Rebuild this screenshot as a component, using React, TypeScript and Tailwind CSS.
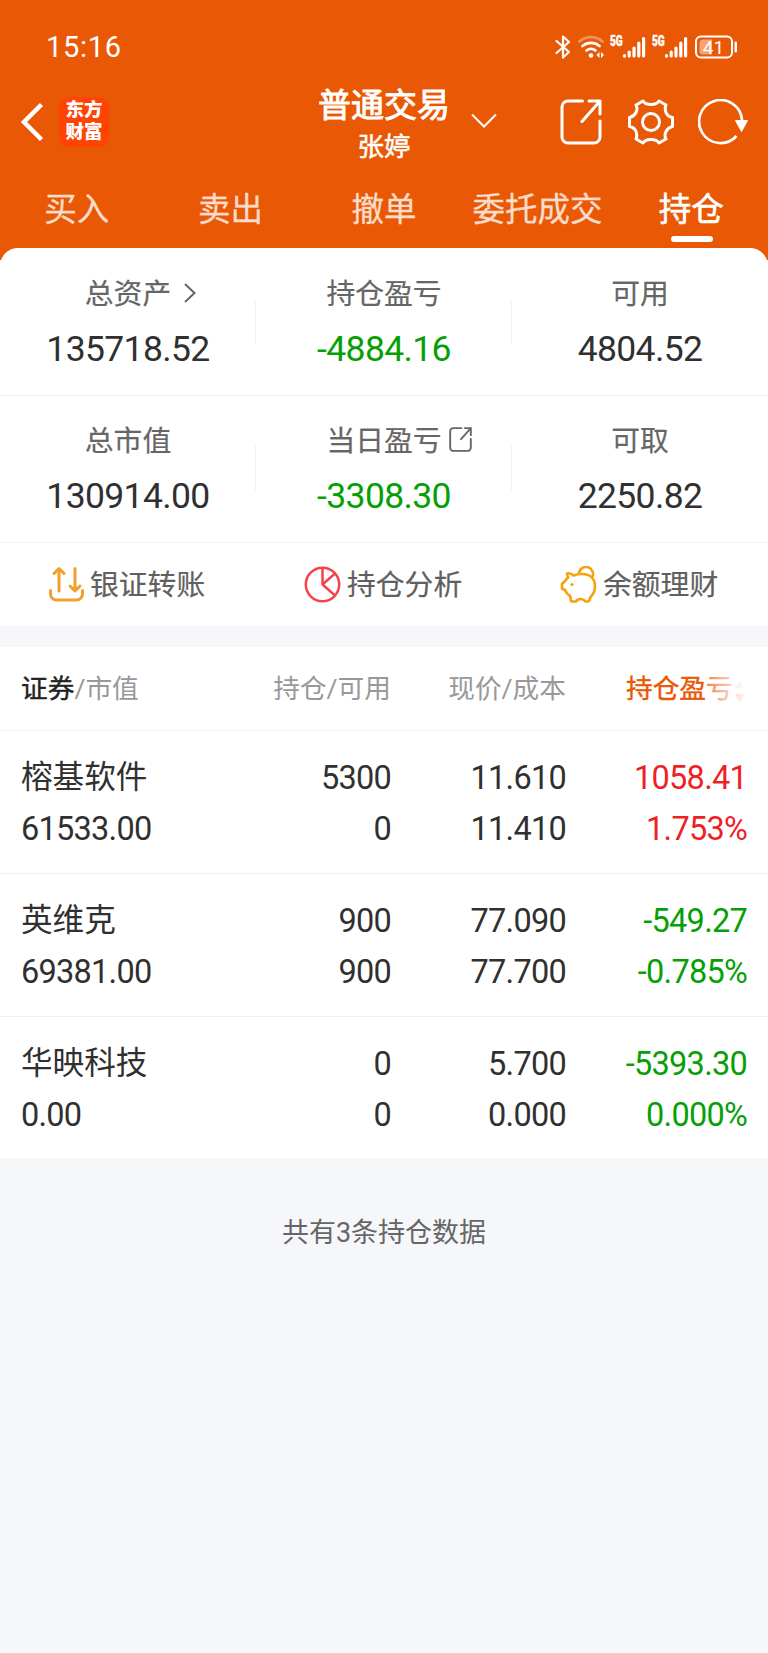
import React from "react";

const metrics = [
  [
    { label: "总资产", value: "135718.52", tone: "text-[#303030]", icon: "chevron" },
    { label: "持仓盈亏", value: "-4884.16", tone: "text-[#06a006]", icon: "" },
    { label: "可用", value: "4804.52", tone: "text-[#303030]", icon: "" },
  ],
  [
    { label: "总市值", value: "130914.00", tone: "text-[#303030]", icon: "" },
    { label: "当日盈亏", value: "-3308.30", tone: "text-[#06a006]", icon: "share" },
    { label: "可取", value: "2250.82", tone: "text-[#303030]", icon: "" },
  ],
];

const holdings = [
  { name: "榕基软件", cap: "61533.00", qty: "5300", avail: "0", price: "11.610", cost: "11.410", pl: "1058.41", pct: "1.753%", tone: "text-[#ee1f25]" },
  { name: "英维克", cap: "69381.00", qty: "900", avail: "900", price: "77.090", cost: "77.700", pl: "-549.27", pct: "-0.785%", tone: "text-[#06a006]" },
  { name: "华映科技", cap: "0.00", qty: "0", avail: "0", price: "5.700", cost: "0.000", pl: "-5393.30", pct: "0.000%", tone: "text-[#06a006]" },
];

const tabs = ["买入", "卖出", "撤单", "委托成交", "持仓"];

function ShareIcon({ className, width }: { className: string; width: number }) {
  return (
    <svg viewBox="0 0 42 46" className={className} fill="none" stroke="currentColor" strokeWidth={width} strokeLinecap="round" strokeLinejoin="round">
      <path d="M22.500 2H8a6 6 0 0 0-6 6v30a6 6 0 0 0 6 6h26a6 6 0 0 0 6-6V22" />
      <path d="M29 2h11v13M40 2 22 22.500" />
    </svg>
  );
}

function Signal() {
  return (
    <div className="flex h-6 w-[36px] items-start">
      <span className="w-[12px] origin-left scale-x-[0.72] text-[14px] leading-[13px] font-black [-webkit-text-stroke:0.400px_#fff]">5G</span>
      <svg viewBox="0 0 24 24" className="h-6 w-6" stroke="#fff" strokeWidth="3.200" strokeLinecap="round">
        <path d="M2.500 21.200v-.5M7.200 21v-4M12 21v-8M16.800 21V8M21.600 21V3.500" />
      </svg>
    </div>
  );
}

function StatusBar() {
  return (
    <div className="flex h-[86px] items-center pt-2 pr-[30px] pl-[46px] text-white">
      <span className="text-[29px] leading-8 tracking-[0.700px]">15:16</span>
      <div className="ml-auto flex h-6 items-center">
        <svg viewBox="0 0 16 24" className="mr-[7px] h-6 w-4" fill="none" stroke="#fff" strokeWidth="2.200" strokeLinejoin="round" strokeLinecap="round">
          <path d="M1.500 6 14 17l-6 5.500v-21L14 7 1.500 18" />
        </svg>
        <svg viewBox="0 0 26 24" className="mr-[6px] h-6 w-[26px]" fill="none" stroke="#fff" strokeLinecap="round" strokeWidth="2.700">
          <path d="M1.500 6.500a17.500 17.500 0 0 1 23 0" opacity=".35" />
          <path d="M4.500 11a13 13 0 0 1 17 0M8.500 15.500a7 7 0 0 1 9 0" />
          <circle cx="13" cy="20.500" r="2.300" fill="#fff" stroke="none" />
          <path d="M21.500 17 18.500 20l3 3zM23 17l3 3-3 3z" fill="#fff" stroke="none" />
        </svg>
        <Signal />
        <div className="w-[6px]" />
        <Signal />
        <svg viewBox="0 0 43 24" className="ml-[7px] h-6 w-[43px]">
          <rect x="1" y="1.500" width="36" height="21" rx="5" fill="none" stroke="#fff" strokeWidth="2" />
          <path d="M8 4.500h9v15H8a3.500 3.500 0 0 1-3.500-3.500V8A3.500 3.500 0 0 1 8 4.500z" fill="#fff" opacity=".45" />
          <rect x="39.500" y="6.500" width="2.500" height="11" rx="1.200" fill="#fff" />
          <text x="18.500" y="18.800" textAnchor="middle" fontSize="19" fill="#fff">41</text>
        </svg>
      </div>
    </div>
  );
}

function TitleBar() {
  return (
    <div className="relative flex h-[88px] items-center pb-[16px] text-white">
      <svg viewBox="0 0 24 40" className="ml-[20px] h-10 w-6" fill="none" stroke="#fff" strokeWidth="4.500">
        <path d="M21.500 2.500 4 20l17.500 17.500" />
      </svg>
      <div className="ml-[15px] flex h-[50px] w-[50px] flex-col items-center justify-center rounded-[10px] bg-[#ff4305] pb-[2px] text-[18.500px] leading-[22px] font-black">
        <span>东方</span>
        <span>财富</span>
      </div>
      <div className="absolute inset-x-0 top-[1px] flex flex-col items-center">
        <span className="text-[33px] leading-[38px] [-webkit-text-stroke:0.900px_#fff]">普通交易</span>
        <span className="mt-[4px] text-[26.500px] leading-[36px] [-webkit-text-stroke:0.500px_#fff]">张婷</span>
      </div>
      <svg viewBox="0 0 26 16" className="absolute top-[27px] left-[471px] h-4 w-[26px]" fill="none" stroke="#fff" strokeWidth="2">
        <path d="M1 1.500l12 12 12-12" />
      </svg>
      <div className="ml-auto flex items-center">
        <ShareIcon className="h-[46px] w-[42px]" width={3} />
        <svg viewBox="0 0 46 46" className="ml-[26px] h-[46px] w-[46px]" fill="none" stroke="#fff" strokeWidth="3" strokeLinejoin="round" strokeLinecap="round">
          <path d="M15 2Q17 5.500 23 5.500T31 2L38 6Q36.500 9.500 38 13.500T44.500 18.500V27.500Q40 28.500 38 32.500T38 40L31 44Q29 40.500 23 40.500T15 44L8 40Q9.500 36.500 8 32.500T1.500 27.500V18.500Q6 17.500 8 13.500T8 6Z" />
          <circle cx="23" cy="23" r="8.500" />
        </svg>
        <svg viewBox="0 0 50 46" className="mr-[20px] ml-[24px] h-[46px] w-[50px]" fill="none" stroke="#fff" strokeWidth="2.700">
          <path d="M38.500 37A21.500 21.500 0 1 1 44 21" />
          <path d="M37.500 21.500h12l-6 11z" fill="#fff" strokeWidth="1" />
        </svg>
      </div>
    </div>
  );
}

function Tabs() {
  return (
    <div className="grid h-[84px] grid-cols-5 text-[32.500px] leading-[40px] text-[#fbdccb]">
      {tabs.map((tab, i) => (
        <div key={tab} className="flex flex-col items-center whitespace-nowrap pt-[16px]">
          <span className={i === 4 ? "text-white [-webkit-text-stroke:0.600px_#fff]" : "[-webkit-text-stroke:0.300px_#fbdccb]"}>{tab}</span>
          {i === 4 && <div className="mt-[6px] ml-[2px] h-[6px] w-[42px] rounded-full bg-white" />}
        </div>
      ))}
    </div>
  );
}

function Metrics() {
  return (
    <>
      {metrics.map((row, r) => (
        <div key={r} className={r === 0 ? "grid h-[148px] grid-cols-3 border-b border-[#f0f0f0]" : "grid h-[147px] grid-cols-3 border-b border-[#f3f3f3]"}>
          {row.map((m, i) => (
            <div key={m.label} className={"relative flex flex-col items-center " + (r === 0 ? "pt-[28px]" : "pt-[27px]")}>
              <div className="relative text-[28.800px] leading-[36px] text-[#666] [-webkit-text-stroke:0.200px_#666]">
                {m.label}
                {m.icon === "chevron" && (
                  <svg viewBox="0 0 12 20" className="absolute top-[7px] left-[99px] h-5 w-3" fill="none" stroke="#666" strokeWidth="2">
                    <path d="M1 1l9.500 9L1 19" />
                  </svg>
                )}
                {m.icon === "share" && <ShareIcon className="absolute top-[4px] left-[122px] h-[25px] w-[25px]" width={3.500} />}
              </div>
              <div className={"mt-[17px] text-[35.500px] leading-[40px] tracking-[-0.620px] " + m.tone}>{m.value}</div>
              {i < 2 && <div className={"absolute right-0 h-[44px] w-px bg-[#f0f0f0] " + (r === 0 ? "top-[53px]" : "top-[50px]")} />}
            </div>
          ))}
        </div>
      ))}
    </>
  );
}

function Actions() {
  const text = "text-[28.800px] leading-[36px] text-[#606060] [-webkit-text-stroke:0.200px_#606060]";
  return (
    <div className="grid h-[83px] grid-cols-3">
      <div className="flex items-center pl-[48px]">
        <svg viewBox="0 0 38 38" className="mr-[4px] h-[38px] w-[38px]" fill="none" stroke="#f29f2e" strokeWidth="3" strokeLinecap="round" strokeLinejoin="round">
          <path d="M2.500 24.500v3.500a6 6 0 0 0 6 6h20a6 6 0 0 0 6-6v-3.500M11 25V3M6 7.500l5-5 5 5M27 2.500V24.500M22 20l5 5 5-5" />
        </svg>
        <span className={text}>银证转账</span>
      </div>
      <div className="flex items-center pl-[48px]">
        <svg viewBox="0 0 38 38" className="mr-[5px] h-[38px] w-[38px]" fill="none" stroke="#f5434b" strokeWidth="2.500">
          <circle cx="18.500" cy="18.500" r="16.700" />
          <path d="M18.500 2V18.500l12.500 11M18.500 18.500 31 7.500" strokeLinejoin="round" />
        </svg>
        <span className={text}>持仓分析</span>
      </div>
      <div className="flex items-center pl-[48px]">
        <svg viewBox="0 0 38 38" className="mr-[5px] h-[38px] w-[38px]" fill="none" stroke="#f5a20c" strokeWidth="2.600" strokeLinejoin="round" strokeLinecap="round">
          <path d="M7 7.500Q10.500 6.500 13.500 9.500Q17 8 22 8C31 8 35 13.500 35 20.500Q35 26.500 30.500 31L29.500 34Q29 35.500 27.500 35.500H25.500Q23.500 33 20.500 33T16 35.500H12.500Q11 35.500 10.800 34L10.200 30Q6.500 28 5.500 24.500L2 22.500V18L5 15Q6.500 13 8 11.500Z" />
          <path d="M19 7.500A7 7 0 1 1 32 11.500" />
          <circle cx="12" cy="18.500" r="1.600" fill="#f5a20c" stroke="none" />
        </svg>
        <span className={text}>余额理财</span>
      </div>
    </div>
  );
}

const columns = "grid grid-cols-[200px_170px_175px_181px] pl-[21px]";
const figure = "text-[32.500px] tracking-[-0.750px]";

export default function App() {
  return (
    <div className="flex h-[1653px] w-[768px] flex-col overflow-hidden bg-[#f6f7fa] font-[Roboto,'Noto_Sans_CJK_SC',sans-serif]">
      <header className="h-[260px] shrink-0 bg-[#e95804]">
        <StatusBar />
        <TitleBar />
        <Tabs />
      </header>
      <section className="relative -mt-3 rounded-t-[18px] bg-white">
        <Metrics />
        <Actions />
      </section>
      <section className="mt-[21px] border-b-8 border-[#f7f7f7] bg-white">
        <div className={columns + " h-[84px] items-center border-b border-[#f3f3f3] pt-[1px] text-right text-[26.700px] leading-9 text-[#999]"}>
          <div className="text-left">
            <span className="text-[#222] [-webkit-text-stroke:0.400px_#222]">证券</span>/市值
          </div>
          <div>持仓/可用</div>
          <div>现价/成本</div>
          <div className="relative ml-[60px] overflow-hidden text-left whitespace-nowrap text-[#e95804] [-webkit-text-stroke:0.400px_#e95804]">
            持仓盈亏
            <svg viewBox="0 0 12 24" className="absolute top-[8px] right-[1px] h-6 w-3">
              <path d="M6 1l5 8H1z" fill="#bbb" />
              <path d="M6 23l5-8H1z" fill="#e95804" />
            </svg>
            <div className="absolute inset-y-0 right-0 w-[40px] bg-linear-to-r from-white/30 to-white" />
          </div>
        </div>
        {holdings.map((h, i) => (
          <div key={h.name} className={columns + " pt-[27px] text-right leading-[40px] text-[#303030] " + (i === 2 ? "h-[141px]" : "h-[143px] border-b border-[#f0f0f0]")}>
            <div className="flex flex-col gap-[11px] text-left">
              <span className="text-[31.600px]">{h.name}</span>
              <span className={figure}>{h.cap}</span>
            </div>
            <div className={"flex flex-col gap-[11px] " + figure}>
              <span>{h.qty}</span>
              <span>{h.avail}</span>
            </div>
            <div className={"flex flex-col gap-[11px] " + figure}>
              <span>{h.price}</span>
              <span>{h.cost}</span>
            </div>
            <div className={"flex flex-col gap-[11px] " + figure + " " + h.tone}>
              <span>{h.pl}</span>
              <span>{h.pct}</span>
            </div>
          </div>
        ))}
      </section>
      <p className="mt-[47px] text-center text-[27px] leading-10 text-[#666]">共有3条持仓数据</p>
    </div>
  );
}
